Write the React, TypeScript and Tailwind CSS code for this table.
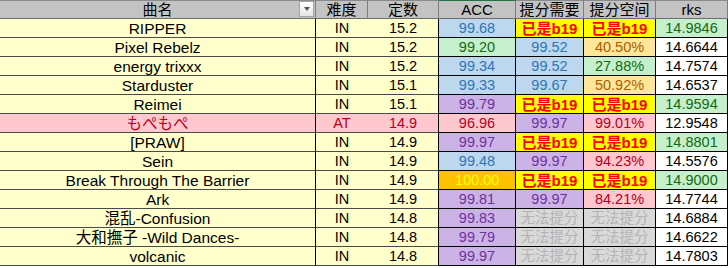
import React from 'react';

type Tone = 'plain' | 'blue' | 'green' | 'purple' | 'b19' | 'neutral' | 'bad' | 'gray' | 'max';

const TONES: Record<Tone, string> = {
  plain: 'bg-white text-black',
  blue: 'bg-[#bdd7ee] text-[#2e75b6]',
  green: 'bg-[#c6efce] text-[#116b11]',
  purple: 'bg-[#ccb3e6] text-[#7030a0]',
  b19: 'bg-[#ffff00] text-[#ff0000] font-bold text-[15px]',
  neutral: 'bg-[#ffe699] text-[#a86000]',
  bad: 'bg-[#ffc7ce] text-[#b8001c]',
  gray: 'bg-[#d9d9d9] text-[#b4b4b4]',
  max: 'bg-[#ffc000] text-[#ffff00]',
};

type Row = {
  name: string;
  diff: string;
  level: string;
  acc: [string, Tone];
  need: [string, Tone];
  room: [string, Tone];
  rks: [string, Tone];
};

const B19: [string, Tone] = ['已是b19', 'b19'];
const NONE: [string, Tone] = ['无法提分', 'gray'];

const ROWS: Row[] = [
  { name: 'RIPPER', diff: 'IN', level: '15.2', acc: ['99.68', 'blue'], need: B19, room: B19, rks: ['14.9846', 'green'] },
  { name: 'Pixel Rebelz', diff: 'IN', level: '15.2', acc: ['99.20', 'green'], need: ['99.52', 'blue'], room: ['40.50%', 'neutral'], rks: ['14.6644', 'plain'] },
  { name: 'energy trixxx', diff: 'IN', level: '15.2', acc: ['99.34', 'blue'], need: ['99.52', 'blue'], room: ['27.88%', 'green'], rks: ['14.7574', 'plain'] },
  { name: 'Starduster', diff: 'IN', level: '15.1', acc: ['99.33', 'blue'], need: ['99.67', 'blue'], room: ['50.92%', 'neutral'], rks: ['14.6537', 'plain'] },
  { name: 'Reimei', diff: 'IN', level: '15.1', acc: ['99.79', 'purple'], need: B19, room: B19, rks: ['14.9594', 'green'] },
  { name: 'もぺもぺ', diff: 'AT', level: '14.9', acc: ['96.96', 'bad'], need: ['99.97', 'purple'], room: ['99.01%', 'bad'], rks: ['12.9548', 'plain'] },
  { name: '[PRAW]', diff: 'IN', level: '14.9', acc: ['99.97', 'purple'], need: B19, room: B19, rks: ['14.8801', 'green'] },
  { name: 'Sein', diff: 'IN', level: '14.9', acc: ['99.48', 'blue'], need: ['99.97', 'purple'], room: ['94.23%', 'bad'], rks: ['14.5576', 'plain'] },
  { name: 'Break Through The Barrier', diff: 'IN', level: '14.9', acc: ['100.00', 'max'], need: B19, room: B19, rks: ['14.9000', 'green'] },
  { name: 'Ark', diff: 'IN', level: '14.9', acc: ['99.81', 'purple'], need: ['99.97', 'purple'], room: ['84.21%', 'bad'], rks: ['14.7744', 'plain'] },
  { name: '混乱-Confusion', diff: 'IN', level: '14.8', acc: ['99.83', 'purple'], need: NONE, room: NONE, rks: ['14.6884', 'plain'] },
  { name: '大和撫子 -Wild Dances-', diff: 'IN', level: '14.8', acc: ['99.79', 'purple'], need: NONE, room: NONE, rks: ['14.6622', 'plain'] },
  { name: 'volcanic', diff: 'IN', level: '14.8', acc: ['99.97', 'purple'], need: NONE, room: NONE, rks: ['14.7803', 'plain'] },
];

const HEADERS = ['曲名', '难度', '定数', 'ACC', '提分需要', '提分空间', 'rks'];

function ValueCell({ value }: { value: [string, Tone] }) {
  return (
    <div className={`h-[19px] pt-[1px] flex items-center justify-center border-b border-r border-black leading-none text-[14.5px] ${TONES[value[1]]}`}>
      {value[0]}
    </div>
  );
}

export default function App() {
  return (
    <div
      className="w-[728px] h-[268px] overflow-hidden bg-white text-[14.5px] text-black"
      style={{ fontFamily: '"Liberation Sans", "Noto Sans CJK SC", sans-serif' }}
    >
      <div className="grid grid-cols-[316px_52px_71px_77px_68px_72px_72px]">
        {/* header row */}
        {HEADERS.map((h, i) => (
          <div
            key={h}
            className={`relative h-[19px] flex items-center justify-center bg-[#c3c3c3] border-t border-b border-r border-t-[#8a8a8a] border-b-[#6e6e6e] border-r-[#7e7e7e] text-[15px] leading-none ${i === 3 ? 'border-t-[#217346]' : ''}`}
          >
            {h}
            {i === 0 && (
              <div className="absolute right-[1px] top-[0px] w-[15px] h-[16px] border border-[#a6a6a6] bg-gradient-to-b from-white to-[#e4e4e4] flex items-center justify-center">
                <div className="w-0 h-0 border-l-[3px] border-r-[3px] border-t-[4px] border-l-transparent border-r-transparent border-t-[#555]" />
              </div>
            )}
          </div>
        ))}

        {ROWS.map((r) => {
          const at = r.diff === 'AT';
          const base = at ? 'bg-[#ffc7ce] text-[#b8001c]' : 'bg-[#ffffcc] text-black';
          return (
            <React.Fragment key={r.name}>
              <div className={`h-[19px] pt-[1px] flex items-center justify-center border-b border-r border-b-[#4a4a4a] border-r-black leading-none text-[15.5px] ${base}`}>
                {r.name}
              </div>
              <div className={`h-[19px] pt-[1px] flex items-center justify-center border-b border-b-[#4a4a4a] leading-none ${base}`}>
                {r.diff}
              </div>
              <div className={`h-[19px] pt-[1px] flex items-center justify-center border-b border-r border-b-[#4a4a4a] border-r-black leading-none ${base}`}>
                {r.level}
              </div>
              <ValueCell value={r.acc} />
              <ValueCell value={r.need} />
              <ValueCell value={r.room} />
              <ValueCell value={r.rks} />
            </React.Fragment>
          );
        })}
      </div>
    </div>
  );
}
